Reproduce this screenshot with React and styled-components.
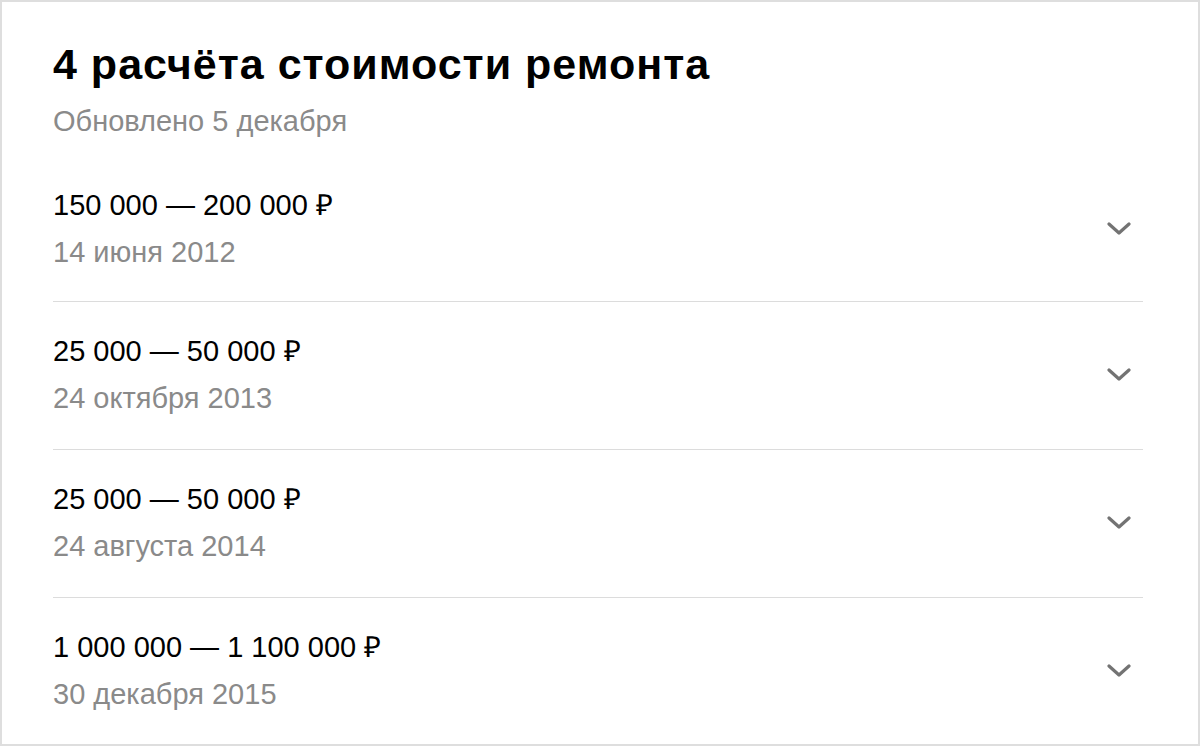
import React from 'react'
import styled, {createGlobalStyle} from 'styled-components'

const Global = createGlobalStyle`
  html, body {
    margin: 0;
    padding: 0;
    background: #fff;
  }
  body {
    font-family: "Liberation Sans", Arial, sans-serif;
    color: #000;
  }
`

const Card = styled.div`
  box-sizing: border-box;
  width: 1200px;
  height: 746px;
  border: 2px solid #dedede;
  padding: 0 55px 0 51px;
  background: #fff;
  overflow: hidden;
`

const Header = styled.div`
  padding-top: 38px;
`

const Title = styled.h1`
  margin: 0;
  font-size: 43px;
  line-height: 48px;
  letter-spacing: 1px;
  font-weight: 700;
  color: #000;
`

const Updated = styled.div`
  margin-top: 17px;
  font-size: 29px;
  line-height: 32px;
  color: #8a8a8a;
`

const List = styled.div`
  display: flex;
  flex-direction: column;
`

const Row = styled.div`
  display: flex;
  align-items: center;
  justify-content: space-between;
  padding: ${p => p.first ? '53px 0 33px' : '34px 0 35px'};
  border-top: ${p => p.first ? 'none' : '1px solid #dcdcdc'};
`

const Info = styled.div`
  display: flex;
  flex-direction: column;
  gap: 16px;
`

const Price = styled.div`
  font-size: 29px;
  line-height: 31px;
  color: #000;
`

const Date = styled.div`
  font-size: 29px;
  line-height: 31px;
  color: #8a8a8a;
`

const Toggle = styled.div`
  width: 48px;
  display: flex;
  justify-content: center;
`

const Chevron = () => (
  <svg width="24" height="14" viewBox="0 0 24 14">
    <path d="M2 2 L12 11 L22 2" fill="none" stroke="#737373" strokeWidth="3.2" strokeLinecap="round" strokeLinejoin="round"/>
  </svg>
)

const estimates = [
  {price: '150 000 — 200 000 ₽', date: '14 июня 2012'},
  {price: '25 000 — 50 000 ₽', date: '24 октября 2013'},
  {price: '25 000 — 50 000 ₽', date: '24 августа 2014'},
  {price: '1 000 000 — 1 100 000 ₽', date: '30 декабря 2015'},
]

export default function App() {
  return (
    <>
      <Global/>
      <Card>
        <Header>
          <Title>4 расчёта стоимости ремонта</Title>
          <Updated>Обновлено 5 декабря</Updated>
        </Header>
        <List>
          {estimates.map((e, i) => (
            <Row key={i} first={i === 0}>
              <Info>
                <Price>{e.price}</Price>
                <Date>{e.date}</Date>
              </Info>
              <Toggle><Chevron/></Toggle>
            </Row>
          ))}
        </List>
      </Card>
    </>
  )
}
